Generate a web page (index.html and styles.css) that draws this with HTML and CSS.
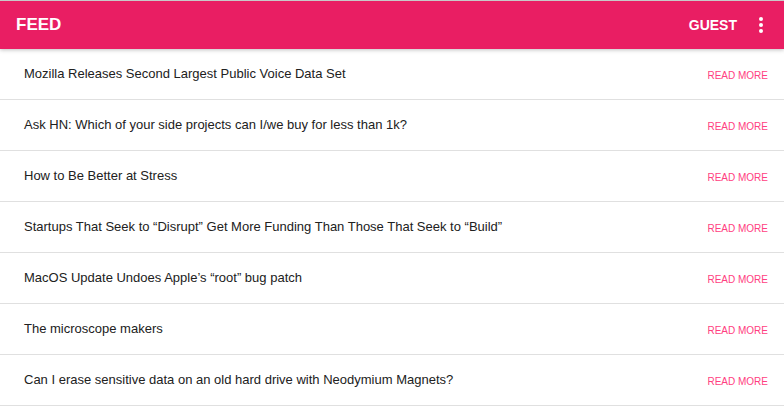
FILE: index.html
```html
<!DOCTYPE html>
<html>
<head>
<meta charset="utf-8">
<link rel="stylesheet" href="styles.css">
</head>
<body>
<header class="appbar">
  <div class="title">FEED</div>
  <div class="actions">
    <span class="user">GUEST</span>
    <svg class="more" width="24" height="24" viewBox="0 0 24 24"><circle cx="12" cy="6" r="2"/><circle cx="12" cy="12" r="2"/><circle cx="12" cy="18" r="2"/></svg>
  </div>
</header>
<ul class="feed">
  <li class="item"><span class="headline">Mozilla Releases Second Largest Public Voice Data Set</span><a class="more-link">READ MORE</a></li>
  <li class="item"><span class="headline">Ask HN: Which of your side projects can I/we buy for less than 1k?</span><a class="more-link">READ MORE</a></li>
  <li class="item"><span class="headline">How to Be Better at Stress</span><a class="more-link">READ MORE</a></li>
  <li class="item"><span class="headline">Startups That Seek to “Disrupt” Get More Funding Than Those That Seek to “Build”</span><a class="more-link">READ MORE</a></li>
  <li class="item"><span class="headline">MacOS Update Undoes Apple’s “root” bug patch</span><a class="more-link">READ MORE</a></li>
  <li class="item"><span class="headline">The microscope makers</span><a class="more-link">READ MORE</a></li>
  <li class="item"><span class="headline">Can I erase sensitive data on an old hard drive with Neodymium Magnets?</span><a class="more-link">READ MORE</a></li>
</ul>
</body>
</html>
```
FILE: styles.css
```css
html, body {
  margin: 0;
  padding: 0;
  background: #fff;
  font-family: "Liberation Sans", Arial, sans-serif;
}
body {
  border-top: 1px solid #c8c8c8;
}
.appbar {
  height: 48px;
  background: #e91e63;
  display: flex;
  align-items: center;
  justify-content: space-between;
  padding: 0 11px 0 16px;
  box-shadow: 0 1px 4px rgba(0,0,0,0.25);
  position: relative;
  z-index: 1;
  color: #fff;
}
.title {
  font-weight: bold;
  font-size: 17px;
}
.actions {
  display: flex;
  align-items: center;
  gap: 12px;
}
.user {
  font-weight: bold;
  font-size: 14px;
}
.more {
  fill: #fff;
  display: block;
}
.feed {
  list-style: none;
  margin: 0;
  padding: 0;
}
.item {
  height: 50px;
  border-bottom: 1px solid #e0e0e0;
  display: flex;
  align-items: center;
  justify-content: space-between;
  padding: 0 16px 0 24px;
}
.headline {
  font-size: 13px;
  color: #212121;
  padding-bottom: 2px;
}
.more-link {
  font-size: 10px;
  color: #ff4081;
  padding-top: 2px;
}
```
